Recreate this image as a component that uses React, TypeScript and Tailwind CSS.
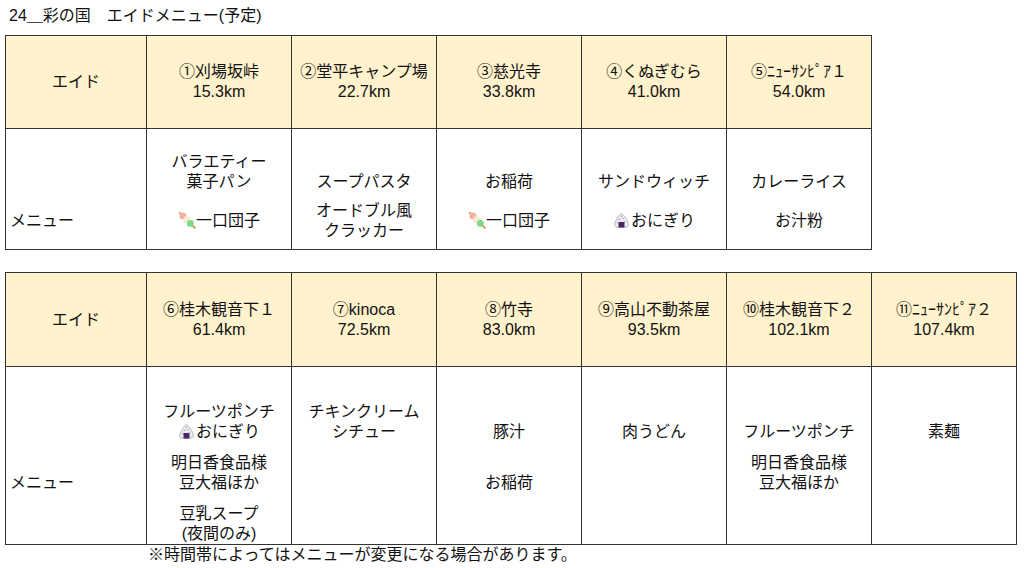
import type React from "react"

const FONT = "font-['Liberation_Sans','Noto_Sans_CJK_JP',sans-serif]"

function Dango() {
  return (
    <svg width="18" height="18" viewBox="0 0 16 16" className="inline-block -mt-[2px] align-middle">
      <line x1="1.5" y1="1.5" x2="15" y2="15" stroke="#c98a3c" strokeWidth="1.4" strokeLinecap="round" />
      <circle cx="4.4" cy="4.4" r="3.1" fill="#f2b0a6" />
      <circle cx="7.8" cy="7.8" r="3.1" fill="#f6ead2" />
      <circle cx="11" cy="11" r="3.1" fill="#7fd98a" />
    </svg>
  )
}

function Onigiri() {
  return (
    <svg width="17" height="17" viewBox="0 0 16 16" className="inline-block mr-[1px] -mt-[2px] align-middle">
      <path d="M8 1.5 C9.5 1.5 14.5 9 14.5 12 C14.5 14 13 14.5 8 14.5 C3 14.5 1.5 14 1.5 12 C1.5 9 6.5 1.5 8 1.5 Z" fill="#ececf0" stroke="#a9a9b3" strokeWidth="0.8" />
      <circle cx="6" cy="7" r="0.6" fill="#9a9aa6" />
      <circle cx="9.5" cy="6" r="0.6" fill="#9a9aa6" />
      <circle cx="11" cy="9" r="0.6" fill="#9a9aa6" />
      <circle cx="4.5" cy="10" r="0.6" fill="#9a9aa6" />
      <circle cx="8" cy="4" r="0.6" fill="#9a9aa6" />
      <rect x="5.2" y="9.4" width="5.6" height="5.2" fill="#4b2563" />
    </svg>
  )
}

type Line = React.ReactNode
type Slot = Line[]

function Lines({ lines }: { lines: Line[] }) {
  return (
    <>
      {lines.map((l, i) => (
        <div key={i} className="leading-[20px] whitespace-nowrap">
          {l}
        </div>
      ))}
    </>
  )
}

const head1 = [
  ["①刈場坂峠", "15.3km"],
  ["②堂平キャンプ場", "22.7km"],
  ["③慈光寺", "33.8km"],
  ["④くぬぎむら", "41.0km"],
  ["⑤ﾆｭｰｻﾝﾋﾟｱ１", "54.0km"],
]

const menu1: Slot[][] = [
  [["バラエティー", "菓子パン"], [<><Dango />一口団子</>]],
  [["スープパスタ"], ["オードブル風", "クラッカー"]],
  [["お稲荷"], [<><Dango />一口団子</>]],
  [["サンドウィッチ"], [<><Onigiri />おにぎり</>]],
  [["カレーライス"], ["お汁粉"]],
]

const head2 = [
  ["⑥桂木観音下１", "61.4km"],
  ["⑦kinoca", "72.5km"],
  ["⑧竹寺", "83.0km"],
  ["⑨高山不動茶屋", "93.5km"],
  ["⑩桂木観音下２", "102.1km"],
  ["⑪ﾆｭｰｻﾝﾋﾟｱ２", "107.4km"],
]

const menu2: Slot[][] = [
  [["フルーツポンチ", <><Onigiri />おにぎり</>], ["明日香食品様", "豆大福ほか"], ["豆乳スープ", "(夜間のみ)"]],
  [["チキンクリーム", "シチュー"], [], []],
  [["豚汁"], ["お稲荷"], []],
  [["肉うどん"], [], []],
  [["フルーツポンチ"], ["明日香食品様", "豆大福ほか"], []],
  [["素麺"], [], []],
]

function HeaderRow({ cols, h }: { cols: string[][]; h: string }) {
  return (
    <div className={`flex bg-[#fff2cc] ${h}`}>
      <div className="w-[141px] shrink-0 border-r border-b border-[#333] flex items-center justify-center">
        <span className="leading-[20px]">エイド</span>
      </div>
      {cols.map((c) => (
        <div key={c[0]} className="w-[145px] shrink-0 border-r border-b border-[#333] flex flex-col items-center justify-center text-center">
          <Lines lines={c} />
        </div>
      ))}
    </div>
  )
}

export default function App() {
  return (
    <div className={`w-[1024px] h-[568px] bg-white text-[16px] text-[#111] ${FONT} overflow-hidden`}>
      <div className="pt-[6px] pl-[9px] leading-[20px]">24＿彩の国　エイドメニュー(予定)</div>

      {/* table 1 */}
      <div className="mt-[9px] ml-[5px] w-fit border-l border-t border-[#333]">
        <HeaderRow cols={head1} h="h-[93px]" />
        <div className="flex h-[121px]">
          <div className="w-[141px] shrink-0 border-r border-b border-[#333] flex flex-col">
            <div className="h-[63px]" />
            <div className="flex-1 flex items-center pl-[4px] leading-[20px]">メニュー</div>
          </div>
          {menu1.map((slots, i) => (
            <div key={i} className="w-[145px] shrink-0 border-r border-b border-[#333] flex flex-col text-center">
              <div className="h-[63px] flex flex-col justify-end">
                <Lines lines={slots[0]} />
              </div>
              <div className="flex-1 flex flex-col justify-center">
                <Lines lines={slots[1]} />
              </div>
            </div>
          ))}
        </div>
      </div>

      {/* table 2 */}
      <div className="mt-[22px] ml-[5px] w-fit border-l border-t border-[#333]">
        <HeaderRow cols={head2} h="h-[94px]" />
        <div className="flex h-[178px]">
          <div className="w-[141px] shrink-0 border-r border-b border-[#333] flex flex-col">
            <div className="h-[75px]" />
            <div className="h-[51px] flex items-end pl-[4px] leading-[20px]">メニュー</div>
          </div>
          {menu2.map((slots, i) => (
            <div key={i} className="w-[145px] shrink-0 border-r border-b border-[#333] flex flex-col text-center">
              <div className="h-[75px] flex flex-col justify-end">
                <Lines lines={slots[0]} />
              </div>
              <div className="h-[51px] flex flex-col justify-end">
                <Lines lines={slots[1]} />
              </div>
              <div className="h-[51px] flex flex-col justify-end">
                <Lines lines={slots[2]} />
              </div>
            </div>
          ))}
        </div>
      </div>

      <div className="pl-[148px] leading-[20px]">※時間帯によってはメニューが変更になる場合があります。</div>
    </div>
  )
}
